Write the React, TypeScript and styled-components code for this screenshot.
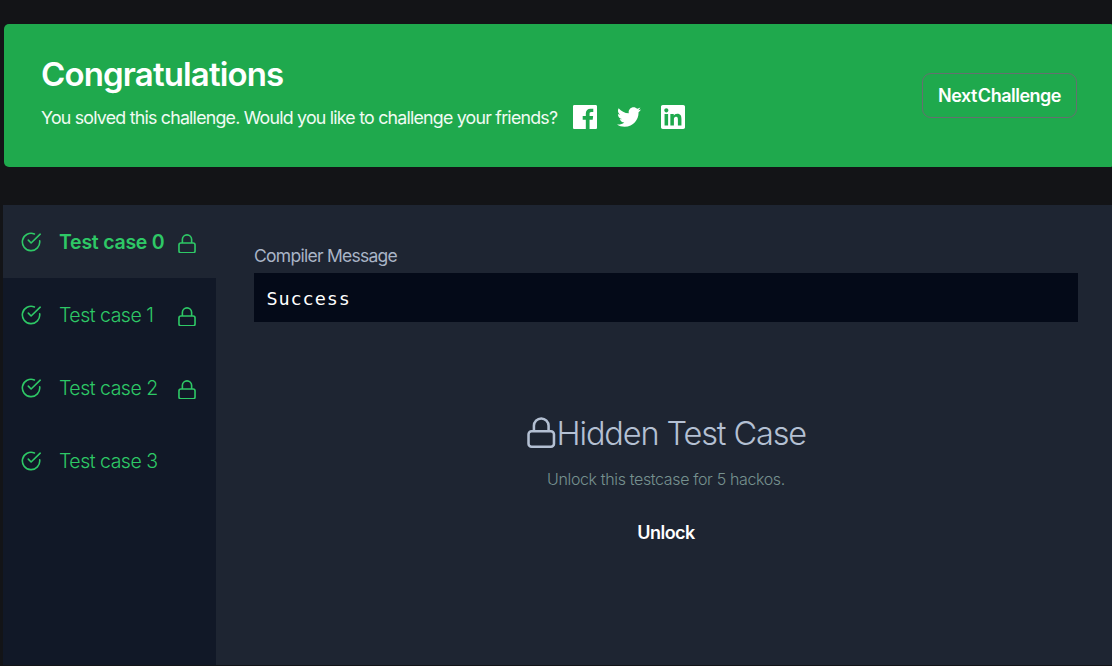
import React from "react";
import styled, { createGlobalStyle } from "styled-components";

const GlobalStyle = createGlobalStyle`
  * { box-sizing: border-box; }
  body {
    margin: 0;
    background: #131417;
    font-family: Inter, "Liberation Sans", sans-serif;
    overflow: hidden;
  }
`;

const Page = styled.div`
  display: flex;
  flex-direction: column;
  height: 666px;
  padding: 24px 0 1px 3px;
`;

const Banner = styled.section`
  display: flex;
  align-items: center;
  justify-content: space-between;
  height: 143px;
  margin-left: 1px;
  padding: 0 35px 0 37px;
  background: #1fa94d;
  border-radius: 5px 1px 1px 5px;
`;

const BannerText = styled.div`
  display: flex;
  flex-direction: column;
  height: 143px;
  padding-top: 29px;
`;

const Title = styled.h1`
  margin: 0 0 1px;
  font-size: 33px;
  line-height: 42px;
  font-weight: 600;
  letter-spacing: -0.85px;
  color: #fff;
  white-space: nowrap;
`;

const Share = styled.div`
  display: flex;
  align-items: center;
  height: 42px;
`;

const ShareText = styled.p`
  width: 532px;
  margin: 0;
  padding-top: 2px;
  font-size: 17.8px;
  line-height: 26px;
  letter-spacing: -0.78px;
  color: #f0fbf3;
  white-space: nowrap;
`;

const Socials = styled.div`
  display: flex;
  gap: 20px;
`;

const SocialIcon = styled.svg`
  display: block;
  width: 24px;
  height: 24px;
  fill: #fff;
`;

const NextButton = styled.button`
  width: 155px;
  height: 45px;
  padding: 0;
  border: 1px solid #65706f;
  border-radius: 9px;
  background: transparent;
  color: #fff;
  font: 600 18px Inter, sans-serif;
  letter-spacing: -0.5px;
  word-spacing: -3px;
  white-space: nowrap;
`;

const Panel = styled.section`
  display: flex;
  flex: 1;
  margin-top: 38px;
  background: #1e2532;
`;

const Sidebar = styled.nav`
  width: 213px;
  background: #111827;
`;

const Tab = styled.div<{ $active?: boolean }>`
  display: flex;
  align-items: center;
  height: 73px;
  padding-left: 18px;
  color: #2ec866;
  background: ${(p) => (p.$active ? "#1e2532" : "transparent")};
`;

const TabLabel = styled.span<{ $active?: boolean }>`
  width: 119px;
  margin-left: 17px;
  padding-top: 1px;
  font-size: 19.5px;
  font-weight: ${(p) => (p.$active ? 600 : 300)};
  letter-spacing: ${(p) => (p.$active ? "-0.25px" : "-0.5px")};
  line-height: 28px;
  white-space: nowrap;
`;

const CheckSvg = styled.svg`
  display: block;
  width: 21px;
  height: 21px;
  fill: none;
  stroke: currentColor;
  stroke-width: 1.6;
  stroke-linecap: round;
  stroke-linejoin: round;
`;

const LockSvg = styled.svg<{ $width: number }>`
  display: block;
  flex: none;
  width: ${(p) => p.$width}px;
  height: ${(p) => (p.$width * 31) / 28}px;
  fill: none;
  stroke: currentColor;
  stroke-width: 2.5;
`;

const TabLock = styled.span`
  padding-top: 4px;
`;

const Content = styled.main`
  display: flex;
  flex: 1;
  flex-direction: column;
  padding: 38px 34px 0 38px;
`;

const FieldLabel = styled.div`
  height: 30px;
  font-size: 17.5px;
  line-height: 26px;
  letter-spacing: -0.73px;
  color: #a9b4c6;
`;

const Output = styled.pre`
  height: 49px;
  margin: 0;
  padding-left: 12.5px;
  background: #040a18;
  color: #fff;
  font-family: "DejaVu Sans Mono", monospace;
  font-size: 18.5px;
  line-height: 52px;
  letter-spacing: 0.9px;
`;

const Hidden = styled.div`
  display: flex;
  flex-direction: column;
  align-items: center;
  padding-top: 87px;
`;

const HiddenTitle = styled.h2`
  display: flex;
  align-items: center;
  gap: 1px;
  margin: 1px 0 0 1px;
  height: 46px;
  font-size: 32.5px;
  font-weight: 300;
  letter-spacing: -1.13px;
  color: #b4c0d3;
  white-space: nowrap;
`;

const Hint = styled.p`
  margin: 11px 0 0;
  font-size: 16px;
  line-height: 24px;
  font-weight: 300;
  letter-spacing: -0.36px;
  color: #76918f;
  white-space: nowrap;
`;

const Unlock = styled.button`
  margin-top: 26px;
  padding: 0;
  height: 30px;
  border: 0;
  background: none;
  color: #fff;
  font: 600 18px Inter, sans-serif;
  letter-spacing: -0.5px;
`;

const CheckIcon = () => (
  <CheckSvg viewBox="0 0 21 21">
    <path d="M18.7 9.9A8.7 8.7 0 1 1 13.4 2.9" />
    <path d="M7.3 9.1 10.1 12 19.2 3.2" />
  </CheckSvg>
);

const LockIcon = ({ width }: { width: number }) => (
  <LockSvg $width={width} viewBox="0 0 28 31">
    <rect x="1.5" y="14" width="25" height="15.3" rx="3" />
    <path d="M6.8 14V8.6a7.2 7.2 0 0 1 14.4 0V14" />
  </LockSvg>
);

const tabs = [
  { label: "Test case 0", locked: true, active: true },
  { label: "Test case 1", locked: true },
  { label: "Test case 2", locked: true },
  { label: "Test case 3", locked: false },
];

const socials = [
  "M22.676 0H1.324C.593 0 0 .593 0 1.324v21.352C0 23.408.593 24 1.324 24h11.494v-9.294H9.689v-3.621h3.129V8.41c0-3.099 1.894-4.785 4.659-4.785 1.325 0 2.464.097 2.796.141v3.24h-1.921c-1.5 0-1.792.721-1.792 1.771v2.311h3.584l-.465 3.63H16.56V24h6.115c.733 0 1.325-.592 1.325-1.324V1.324C24 .593 23.408 0 22.676 0",
  "M23.954 4.569c-.885.389-1.83.654-2.825.775 1.014-.611 1.794-1.574 2.163-2.723-.951.555-2.005.959-3.127 1.184-.896-.959-2.173-1.559-3.591-1.559-2.717 0-4.92 2.203-4.92 4.917 0 .39.045.765.127 1.124C7.691 8.094 4.066 6.13 1.64 3.161c-.427.722-.666 1.561-.666 2.475 0 1.71.87 3.213 2.188 4.096-.807-.026-1.566-.248-2.228-.616v.061c0 2.385 1.693 4.374 3.946 4.827-.413.111-.849.171-1.296.171-.314 0-.615-.03-.916-.086.631 1.953 2.445 3.377 4.604 3.417-1.68 1.319-3.809 2.105-6.102 2.105-.39 0-.779-.023-1.17-.067 2.189 1.394 4.768 2.209 7.557 2.209 9.054 0 13.999-7.496 13.999-13.986 0-.209 0-.42-.015-.63.961-.689 1.8-1.56 2.46-2.548l-.047-.02z",
  "M20.447 20.452h-3.554v-5.569c0-1.328-.027-3.037-1.852-3.037-1.853 0-2.136 1.445-2.136 2.939v5.667H9.351V9h3.414v1.561h.046c.477-.9 1.637-1.85 3.37-1.85 3.601 0 4.267 2.37 4.267 5.455v6.286zM5.337 7.433c-1.144 0-2.063-.926-2.063-2.065 0-1.138.92-2.063 2.063-2.063 1.14 0 2.064.925 2.064 2.063 0 1.139-.925 2.065-2.064 2.065zm1.782 13.019H3.555V9h3.564v11.452zM22.225 0H1.771C.792 0 0 .774 0 1.729v20.542C0 23.227.792 24 1.771 24h20.451C23.2 24 24 23.227 24 22.271V1.729C24 .774 23.2 0 22.222 0h.003z",
];

export default function App() {
  return (
    <Page>
      <GlobalStyle />
      <Banner>
        <BannerText>
          <Title>Congratulations</Title>
          <Share>
            <ShareText>You solved this challenge. Would you like to challenge your friends?</ShareText>
            <Socials>
              {socials.map((d) => (
                <SocialIcon key={d} viewBox="0 0 24 24">
                  <path d={d} />
                </SocialIcon>
              ))}
            </Socials>
          </Share>
        </BannerText>
        <NextButton>Next Challenge</NextButton>
      </Banner>
      <Panel>
        <Sidebar>
          {tabs.map((t) => (
            <Tab key={t.label} $active={t.active}>
              <CheckIcon />
              <TabLabel $active={t.active}>{t.label}</TabLabel>
              {t.locked && (
                <TabLock>
                  <LockIcon width={18} />
                </TabLock>
              )}
            </Tab>
          ))}
        </Sidebar>
        <Content>
          <FieldLabel>Compiler Message</FieldLabel>
          <Output>Success</Output>
          <Hidden>
            <HiddenTitle>
              <LockIcon width={28.5} />
              <span>Hidden Test Case</span>
            </HiddenTitle>
            <Hint>Unlock this testcase for 5 hackos.</Hint>
            <Unlock>Unlock</Unlock>
          </Hidden>
        </Content>
      </Panel>
    </Page>
  );
}
